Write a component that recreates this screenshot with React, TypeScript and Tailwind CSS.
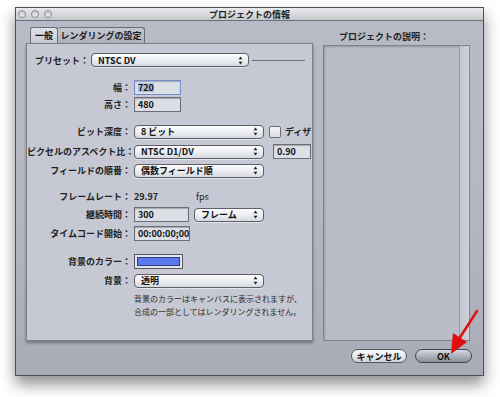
import React from 'react';

const FONT = { fontFamily: '"Noto Sans CJK JP", "Liberation Sans", sans-serif' };

const Arrows = () => (
  <svg width="5" height="9" viewBox="0 0 5 9" className="shrink-0">
    <path d="M2.5 0.5 L4.5 3.2 L0.5 3.2 Z" fill="#222" />
    <path d="M2.5 8.5 L4.5 5.8 L0.5 5.8 Z" fill="#222" />
  </svg>
);

const Select = ({ value, width }: { value: string; width: string }) => (
  <div
    className={`${width} h-[14px] flex items-center justify-between pl-[6px] pr-[5px] rounded-[4px] border border-[#5c5f66] bg-gradient-to-b from-[#fbfbfd] via-[#eceef2] to-[#d6d9e0] shadow-[0_1px_0_rgba(255,255,255,0.5)]`}
  >
    <span className="text-[9px] font-bold text-[#111] leading-none">{value}</span>
    <Arrows />
  </div>
);

const Field = ({ value, width, focus = false }: { value: string; width: string; focus?: boolean }) => (
  <div
    className={`${width} h-[15px] flex items-center pl-[3px] overflow-hidden border ${
      focus ? 'border-[#6f8fd0] shadow-[0_0_0_2px_#9db4e6]' : 'border-[#6b6e76]'
    } bg-[#dcdfe6] shadow-[inset_0_1px_1px_rgba(0,0,0,0.25)]`}
  >
    <span
      className={`text-[9px] font-bold leading-none text-[#111] whitespace-nowrap ${focus ? 'bg-[#aebfe0]' : ''}`}
    >
      {value}
    </span>
  </div>
);

const Row = ({ label, children, mt }: { label: string; children?: React.ReactNode; mt: string }) => (
  <div className={`flex items-center h-[15px] ${mt}`}>
    <div className="w-[107px] shrink-0 text-right pr-[3px] text-[9px] font-bold text-[#222] leading-none whitespace-nowrap">
      {label}
    </div>
    <div className="flex items-center">{children}</div>
  </div>
);

const Light = () => (
  <div className="w-[8px] h-[8px] rounded-full border border-[#868990] bg-gradient-to-b from-[#c4c7ce] to-[#eef0f3]" />
);

export default function App() {
  return (
    <div className="w-[500px] h-[397px] bg-white pl-[15px] pt-[7px] overflow-hidden relative" style={FONT}>
      <div className="w-[469px] h-[369px] flex flex-col border border-[#4d4f55] shadow-[0_8px_14px_rgba(0,0,0,0.45)]">
        {/* title bar */}
        <div className="h-[13px] shrink-0 relative flex items-center bg-gradient-to-b from-[#eaeaec] to-[#c6c8cc] border-b border-[#6d7078]">
          <div className="flex items-center gap-[5px] pl-[2px]">
            <Light />
            <Light />
            <Light />
          </div>
          <div className="absolute inset-0 flex items-center justify-center text-[9px] font-bold text-[#222] leading-none">
            プロジェクトの情報
          </div>
        </div>

        {/* body */}
        <div className="flex-1 flex flex-col bg-gradient-to-b from-[#b8bbc6] via-[#b5b8c3] to-[#a9acb7]">
          <div className="flex pt-[6px] pl-[10px] pr-[13px] gap-[10px]">
            {/* left column */}
            <div className="w-[287px] flex flex-col">
              <div className="flex pl-[4px] h-[16px] items-end">
                <div className="w-[28px] h-[16px] flex items-center justify-center rounded-t-[3px] border border-b-0 border-[#6a6d75] bg-gradient-to-b from-[#dfe2e9] to-[#c7cad4] text-[9px] font-bold text-[#111] leading-none">
                  一般
                </div>
                <div className="w-[87px] h-[16px] flex items-center justify-center rounded-t-[3px] border border-b-0 border-l-0 border-[#6a6d75] bg-gradient-to-b from-[#c4c7d0] to-[#aeb1bb] text-[9px] font-bold text-[#1a1a1a] leading-none">
                  レンダリングの設定
                </div>
              </div>
              <div className="h-[298px] bg-[#c6c9d3] border border-[#7c7f88] shadow-[0_2px_3px_rgba(0,0,0,0.35)] flex flex-col">
                {/* preset */}
                <div className="flex items-center h-[14px] mt-[9px] pl-[8px]">
                  <span className="w-[56px] text-[9px] font-bold text-[#222] leading-none">プリセット：</span>
                  <Select value="NTSC DV" width="w-[158px]" />
                  <div className="w-[53px] h-px bg-[#6e7179] ml-[3px]" />
                </div>

                <Row label="幅：" mt="mt-[13px]">
                  <Field value="720" width="w-[47px]" focus />
                </Row>
                <Row label="高さ：" mt="mt-[2px]">
                  <Field value="480" width="w-[47px]" />
                </Row>

                <Row label="ビット深度：" mt="mt-[12px]">
                  <Select value="8 ビット" width="w-[130px]" />
                  <div className="w-[12px] h-[12px] ml-[5px] rounded-[2px] border border-[#6b6e76] bg-gradient-to-b from-[#f4f5f8] to-[#dadde4]" />
                  <span className="ml-[4px] text-[9px] font-bold text-[#222] leading-none">ディザ</span>
                </Row>
                <Row label="ピクセルのアスペクト比：" mt="mt-[5px]">
                  <Select value="NTSC D1/DV" width="w-[130px]" />
                  <div className="ml-[9px]">
                    <Field value="0.90" width="w-[38px]" />
                  </div>
                </Row>
                <Row label="フィールドの順番：" mt="mt-[4px]">
                  <Select value="偶数フィールド順" width="w-[130px]" />
                </Row>

                <Row label="フレームレート：" mt="mt-[11px]">
                  <span className="text-[9px] font-bold text-[#222] leading-none w-[62px]">29.97</span>
                  <span className="text-[9px] text-[#222] leading-none">fps</span>
                </Row>
                <Row label="継続時間：" mt="mt-[3px]">
                  <Field value="300" width="w-[55px]" />
                  <div className="ml-[5px]">
                    <Select value="フレーム" width="w-[70px]" />
                  </div>
                </Row>
                <Row label="タイムコード開始：" mt="mt-[4px]">
                  <Field value="00:00:00;00" width="w-[56px]" />
                </Row>

                <Row label="背景のカラー：" mt="mt-[13px]">
                  <div className="w-[49px] h-[15px] border border-[#55585f] bg-[#e4e6ec] p-[2px]">
                    <div className="w-full h-full bg-[#5c78ee] border border-[#2c3a80]" />
                  </div>
                </Row>
                <Row label="背景：" mt="mt-[4px]">
                  <Select value="透明" width="w-[130px]" />
                </Row>

                <div className="mt-[4px] pl-[107px] text-[8px] leading-[13px] text-[#2a2a2a] whitespace-nowrap">
                  <div>背景のカラーはキャンバスに表示されますが、</div>
                  <div>合成の一部としてはレンダリングされません。</div>
                </div>
              </div>
            </div>

            {/* right column */}
            <div className="w-[147px] flex flex-col">
              <div className="h-[18px] flex items-center pl-[16px] text-[9px] font-bold text-[#222] leading-none">
                プロジェクトの説明：
              </div>
              <div className="h-[296px] flex border border-[#80838c] bg-[#babdc8] shadow-[inset_1px_1px_2px_rgba(0,0,0,0.2)]">
                <div className="flex-1" />
                <div className="w-[10px] border-l border-[#9a9da6] bg-gradient-to-r from-[#c2c5cf] to-[#cfd2db]" />
              </div>
            </div>
          </div>

          {/* buttons */}
          <div className="flex justify-end gap-[8px] pr-[11px] mt-[8px]">
            <div className="w-[56px] h-[14px] flex items-center justify-center rounded-full border border-[#55585f] bg-gradient-to-b from-[#fafbfc] via-[#e6e8ec] to-[#cfd2d9] text-[9px] font-bold text-[#111] leading-none">
              キャンセル
            </div>
            <div className="w-[57px] h-[14px] flex items-center justify-center rounded-full border border-[#44474e] bg-gradient-to-b from-[#d7dae1] via-[#aeb2bc] to-[#8c909b] text-[9px] font-bold text-[#111] leading-none">
              OK
            </div>
          </div>
        </div>
      </div>

      {/* red annotation arrow */}
      <svg className="absolute left-0 top-0" width="500" height="397" viewBox="0 0 500 397">
        <line x1="477" y1="311" x2="459" y2="339" stroke="#e01010" strokeWidth="2.5" strokeLinecap="round" />
        <path d="M451 354 L453 333 L467 342 Z" fill="#e01010" />
      </svg>
    </div>
  );
}
